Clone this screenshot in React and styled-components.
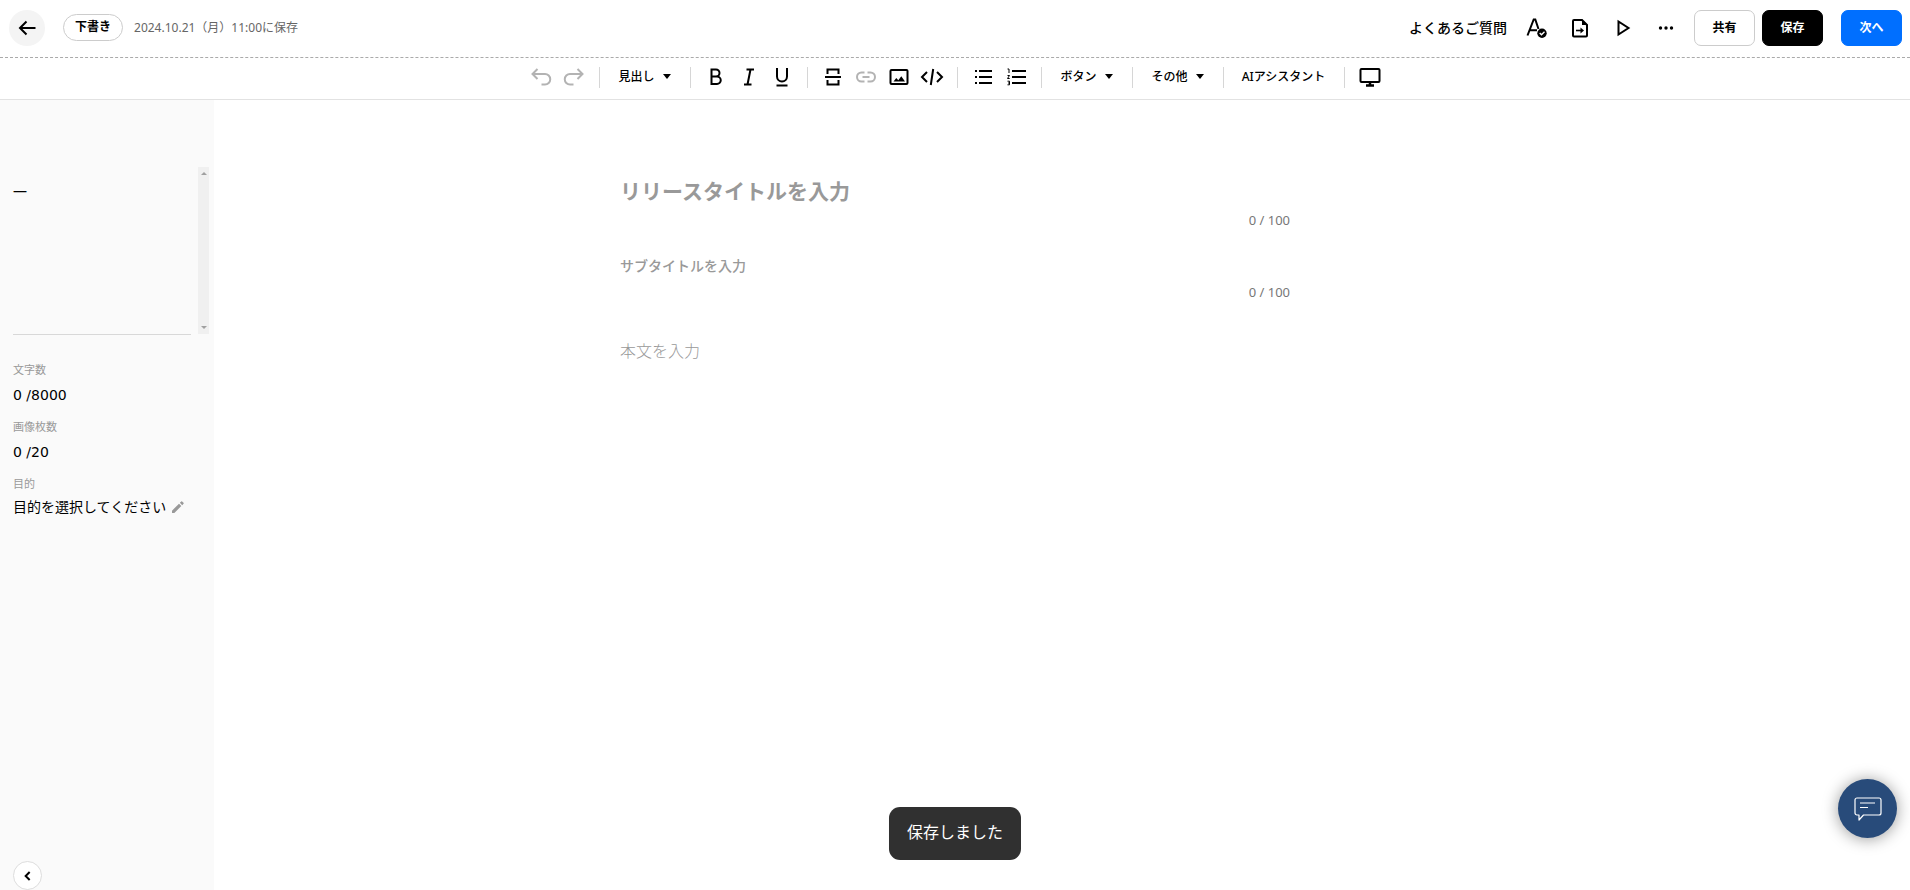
import { useState } from "react";
import styled, { createGlobalStyle } from "styled-components";

const BLUE = '#006fff'
const NAVY = '#284b7a'
const GRAY = '#999'
const FONT = '"Noto Sans", "Noto Sans CJK JP", sans-serif'
const NUMBER_FONT = '"DejaVu Sans", "Noto Sans CJK JP", sans-serif'

const GlobalStyle = createGlobalStyle`
  * {
    box-sizing: border-box;
  }
  body {
    margin: 0;
    font-family: ${FONT};
    color: #000;
    background: #fff;
  }
  button, input, textarea {
    font-family: inherit;
  }
`

const Page = styled.div`
  min-height: 100vh;
  display: flex;
  flex-direction: column;
`

const Header = styled.header`
  height: 58px;
  padding: 0 8px 2px 9px;
  display: flex;
  align-items: center;
  justify-content: space-between;
  border-bottom: 1px dashed #aaa;
`

const HeaderSide = styled.div`
  display: flex;
  align-items: center;
`

const BackButton = styled.button`
  width: 36px;
  height: 36px;
  padding: 0;
  border: none;
  border-radius: 50%;
  background: #f4f4f4;
  display: flex;
  align-items: center;
  justify-content: center;
  cursor: pointer;
`

const Status = styled.span`
  margin: 0 11px 0 18px;
  padding: 0 11px 2px;
  border: 1px solid #ccc;
  border-radius: 14px;
  font-size: 12px;
  line-height: 23px;
  font-weight: 700;
`

const SavedAt = styled.span`
  padding-bottom: 2px;
  font-size: 12px;
  color: #666;
`

const HelpLink = styled.a`
  margin-right: 8px;
  padding-bottom: 2px;
  font-size: 14px;
  font-weight: 500;
  color: #000;
  text-decoration: none;
`

const IconButton = styled.button`
  width: ${({ $width }) => $width || 32}px;
  height: 32px;
  padding: 0;
  border: none;
  background: none;
  color: ${({ disabled }) => (disabled ? '#b3b3b3' : '#000')};
  display: flex;
  align-items: center;
  justify-content: center;
  cursor: pointer;
`

const ActionButton = styled.button`
  width: 61px;
  height: 36px;
  padding: 0 0 2px;
  margin-left: ${({ $gap }) => $gap}px;
  border: 1px solid ${({ $border }) => $border};
  border-radius: 7px;
  background: ${({ $bg }) => $bg};
  color: ${({ $color }) => $color};
  font-size: 12px;
  font-weight: 700;
  cursor: pointer;
`

const Toolbar = styled.div`
  height: 42px;
  padding-bottom: 3px;
  display: flex;
  align-items: center;
  justify-content: center;
  border-bottom: 1px solid #e2e2e2;
`

const ToolGroup = styled.div`
  display: flex;
  gap: 1px;
`

const Separator = styled.span`
  width: 1px;
  height: 21px;
  margin: 0 9px;
  background: #d6d6d6;
`

const TextButton = styled.button`
  width: ${({ $width }) => $width}px;
  height: 32px;
  padding: 0 0 2px;
  border: none;
  background: none;
  color: #000;
  display: flex;
  align-items: center;
  justify-content: center;
  gap: 8px;
  font-size: 12px;
  font-weight: 500;
  white-space: nowrap;
  cursor: pointer;
`

const Caret = styled.span`
  border: 4px solid transparent;
  border-top: 5px solid #000;
  border-bottom: none;
`

const Body = styled.div`
  flex: 1;
  display: flex;
`

const Sidebar = styled.aside`
  width: 214px;
  padding: 67px 5px 0 13px;
  display: flex;
  flex-direction: column;
  align-items: flex-start;
  background: #fafafa;
`

const Outline = styled.div`
  width: 100%;
  height: 168px;
  display: flex;
  justify-content: space-between;
`

const OutlineText = styled.div`
  width: 178px;
  padding-top: 14px;
  border-bottom: 1px solid #d8d8d8;
  font-size: 14px;
  line-height: 20px;
`

const ScrollTrack = styled.div`
  width: 11px;
  height: 167px;
  padding: 5px 0;
  display: flex;
  flex-direction: column;
  align-items: center;
  justify-content: space-between;
  background: #f0f0f0;
`

const ScrollArrow = styled.span`
  border: 3px solid transparent;
  border-${({ $down }) => ($down ? 'top' : 'bottom')}-color: #a0a0a0;
  border-${({ $down }) => ($down ? 'bottom' : 'top')}: none;
`

const Stats = styled.dl`
  margin: 26px 0 0;
`

const StatLabel = styled.dt`
  font-size: 11px;
  line-height: 18px;
  color: ${GRAY};
`

const StatValue = styled.dd`
  margin: 0 0 10px;
  padding-top: 4px;
  font-family: ${NUMBER_FONT};
  font-size: 14px;
  line-height: 25px;
`

const Purpose = styled.dd`
  margin: 0;
  display: flex;
  align-items: center;
  gap: 4px;
  font-size: 14px;
  line-height: 28px;
`

const EditButton = styled.button`
  padding: 0;
  border: none;
  background: none;
  color: ${GRAY};
  display: flex;
  cursor: pointer;
`

const CollapseButton = styled.button`
  width: 29px;
  height: 29px;
  padding: 0;
  margin-top: auto;
  border: 1px solid #ddd;
  border-radius: 50%;
  background: #fff;
  display: flex;
  align-items: center;
  justify-content: center;
  cursor: pointer;
`

const Main = styled.main`
  flex: 1;
  padding: 73px 214px 0 0;
  display: flex;
  justify-content: center;
`

const Editor = styled.div`
  width: 670px;
  display: flex;
  flex-direction: column;
`

const Field = styled.input`
  width: 100%;
  height: ${({ $height }) => $height}px;
  padding: 0;
  border: none;
  outline: none;
  background: none;
  font-size: ${({ $size }) => $size}px;
  font-weight: ${({ $weight }) => $weight};
  &::placeholder {
    color: ${GRAY};
    opacity: 1;
  }
`

const Counter = styled.div`
  margin-bottom: ${({ $bottom }) => $bottom}px;
  padding-top: ${({ $top }) => $top}px;
  text-align: right;
  font-size: 13px;
  line-height: 20px;
  color: #777;
`

const BodyField = styled.textarea`
  width: 100%;
  height: 120px;
  padding: 0;
  border: none;
  outline: none;
  resize: none;
  background: none;
  font-size: 16px;
  line-height: 26px;
  font-weight: 300;
  &::placeholder {
    color: ${GRAY};
    opacity: 1;
  }
`

const Toast = styled.div`
  position: fixed;
  bottom: 30px;
  left: 50%;
  transform: translateX(-50%);
  padding: 0 18px 2px;
  border-radius: 11px;
  background: #303030;
  color: #fff;
  font-size: 16px;
  line-height: 51px;
  white-space: nowrap;
`

const ChatButton = styled.button`
  position: fixed;
  right: 13px;
  bottom: 52px;
  width: 59px;
  height: 59px;
  padding: 0;
  border: none;
  border-radius: 50%;
  background: ${NAVY};
  box-shadow: 0 1px 16px rgba(0, 0, 0, 0.4);
  display: flex;
  align-items: center;
  justify-content: center;
  cursor: pointer;
`

const Icon = ({ size = 24, stroke = 2, children }) => (
  <svg width={size} height={size} viewBox="0 0 24 24" fill="none" stroke="currentColor" strokeWidth={stroke} aria-hidden="true">
    {children}
  </svg>
)

const ICONS = {
  back: <path d="M20.500 12H5M11.500 5.500 5 12l6.500 6.500" />,
  proof: (
    <>
      <path d="M2.500 19.500 8.700 3.500h1.600L13.500 13M5 14.200h7" />
      <circle cx="17" cy="17.300" r="4.700" fill="currentColor" stroke="none" />
      <path d="m14.700 17 1.800 1.800 3-3" stroke="#fff" strokeWidth="1.400" />
    </>
  ),
  file: (
    <>
      <path d="M14 4H6a1 1 0 0 0-1 1v14.500a1 1 0 0 0 1 1h12a1 1 0 0 0 1-1V9z" />
      <path d="M14 3.500V9h5.500z" fill="currentColor" stroke="none" />
      <path d="M8 14.500h6" strokeWidth="1.600" />
      <path d="m12.500 11.500 3.500 3-3.500 3z" fill="currentColor" stroke="none" />
    </>
  ),
  play: <path d="M7.500 5.500v13L17.500 12z" />,
  more: (
    <g fill="currentColor" stroke="none">
      <circle cx="6.500" cy="12" r="1.700" />
      <circle cx="12" cy="12" r="1.700" />
      <circle cx="17.500" cy="12" r="1.700" />
    </g>
  ),
  undo: <path d="M8.500 4 3.500 9l5 5M4 9h12a5.200 5.200 0 0 1 0 10.500h-3.500" />,
  redo: <path d="m15.500 4 5 5-5 5M20 9H8A5.200 5.200 0 0 0 8 19.500h3.500" />,
  bold: <path d="M7.500 4.500h4.500a3.500 3.500 0 0 1 0 7H7.500zM7.500 11.500h5.500a3.700 3.700 0 0 1 0 7.500H7.500z" />,
  italic: <path d="M9.500 4.500h7.500M7 19.500h7.500M13.500 4.500l-3 15" />,
  underline: <path d="M7 3v8.500a5 5 0 0 0 10 0V3M6.500 20.500h11" />,
  rule: <path d="M4 12h16M6.500 9V4.500h11V9M6.500 15v4.500h11V15" />,
  link: <path d="M10.500 7.500H7.500a4.500 4.500 0 0 0 0 9h3M13.500 7.500h3a4.500 4.500 0 0 1 0 9h-3M8.500 12h7" />,
  image: (
    <>
      <rect x="3.500" y="5" width="17" height="14" rx="1" />
      <path d="M6.500 16.500 9.300 13l2 2.300 3-4 3.700 5.200z" fill="currentColor" stroke="none" />
    </>
  ),
  code: <path d="M7 7l-5 5 5 5M17 7l5 5-5 5M13.200 4l-2.400 16" />,
  bullets: (
    <>
      <path d="M8 6h13M8 12h13M8 18h13" />
      <path d="M4 6h2M4 12h2M4 18h2" />
    </>
  ),
  numbers: (
    <>
      <path d="M8 6h14M8 12h14M8 18h14" />
      <path d="M3.500 4H5v4M3.500 10.500h2l-2 3h2.200M3.500 16.200h2v3.600h-2M4 18h1.500" strokeWidth="1" />
    </>
  ),
  screen: (
    <>
      <rect x="2.500" y="4" width="19" height="13" rx="1" />
      <path d="M12 17v3M8 20.500h8" strokeWidth="2.500" />
    </>
  ),
  pencil: <path d="M3 17.500V21h3.500L17 10.500 13.500 7zM18.300 9.200l2-2a1 1 0 0 0 0-1.400l-2.100-2.100a1 1 0 0 0-1.400 0l-2 2z" fill="currentColor" stroke="none" />,
  left: <path d="m14.500 6-6 6 6 6" />,
}

const TOOLS = [
  [{ icon: 'undo', label: '元に戻す', disabled: true }, { icon: 'redo', label: 'やり直す', disabled: true }],
  [{ text: '見出し', width: 72, caret: true }],
  [{ icon: 'bold', label: '太字' }, { icon: 'italic', label: '斜体' }, { icon: 'underline', label: '下線' }],
  [
    { icon: 'rule', label: '区切り線' },
    { icon: 'link', label: 'リンク', disabled: true },
    { icon: 'image', label: '画像' },
    { icon: 'code', label: '埋め込み' },
  ],
  [{ icon: 'bullets', label: '箇条書き' }, { icon: 'numbers', label: '番号付きリスト' }],
  [{ text: 'ボタン', width: 72, caret: true }],
  [{ text: 'その他', width: 72, caret: true }],
  [{ text: 'AIアシスタント', width: 102 }],
  [{ icon: 'screen', label: 'プレビュー' }],
]

const Tool = ({ tool }) => {
  if (tool.text) {
    return (
      <TextButton type="button" $width={tool.width}>
        {tool.text}
        {tool.caret && <Caret />}
      </TextButton>
    )
  }
  return (
    <IconButton type="button" aria-label={tool.label} disabled={tool.disabled}>
      <Icon>{ICONS[tool.icon]}</Icon>
    </IconButton>
  )
}

export default function App() {
  const [title, setTitle] = useState('')
  const [subtitle, setSubtitle] = useState('')
  const [body, setBody] = useState('')

  return (
    <Page>
      <GlobalStyle />
      <Header>
        <HeaderSide>
          <BackButton type="button" aria-label="戻る"><Icon>{ICONS.back}</Icon></BackButton>
          <Status>下書き</Status>
          <SavedAt>2024.10.21（月）11:00に保存</SavedAt>
        </HeaderSide>
        <HeaderSide>
          <HelpLink href="#faq">よくあるご質問</HelpLink>
          <IconButton type="button" $width={43} aria-label="校正"><Icon>{ICONS.proof}</Icon></IconButton>
          <IconButton type="button" $width={43} aria-label="書き出し"><Icon>{ICONS.file}</Icon></IconButton>
          <IconButton type="button" $width={43} aria-label="再生"><Icon>{ICONS.play}</Icon></IconButton>
          <IconButton type="button" $width={43} aria-label="その他の操作"><Icon>{ICONS.more}</Icon></IconButton>
          <ActionButton type="button" $gap={7} $bg="#fff" $border="#ccc" $color="#000">共有</ActionButton>
          <ActionButton type="button" $gap={7} $bg="#000" $border="#000" $color="#fff">保存</ActionButton>
          <ActionButton type="button" $gap={18} $bg={BLUE} $border={BLUE} $color="#fff">次へ</ActionButton>
        </HeaderSide>
      </Header>
      <Toolbar role="toolbar">
        {TOOLS.map((group, i) => [
          i > 0 && <Separator key={`sep-${i}`} />,
          <ToolGroup key={`group-${i}`}>
            {group.map((tool) => <Tool key={tool.text || tool.icon} tool={tool} />)}
          </ToolGroup>,
        ])}
      </Toolbar>
      <Body>
        <Sidebar>
          <Outline>
            <OutlineText>{title || '―'}</OutlineText>
            <ScrollTrack aria-hidden="true">
              <ScrollArrow />
              <ScrollArrow $down />
            </ScrollTrack>
          </Outline>
          <Stats>
            <StatLabel>文字数</StatLabel>
            <StatValue>{body.length} /8000</StatValue>
            <StatLabel>画像枚数</StatLabel>
            <StatValue>0 /20</StatValue>
            <StatLabel>目的</StatLabel>
            <Purpose>
              目的を選択してください
              <EditButton type="button" aria-label="目的を編集"><Icon size={16}>{ICONS.pencil}</Icon></EditButton>
            </Purpose>
          </Stats>
          <CollapseButton type="button" aria-label="サイドバーを閉じる"><Icon size={16} stroke={3}>{ICONS.left}</Icon></CollapseButton>
        </Sidebar>
        <Main>
          <Editor>
            <Field aria-label="リリースタイトル" placeholder="リリースタイトルを入力" $height={36} $size={21} $weight={700} value={title} onChange={(e) => setTitle(e.target.value)} />
            <Counter $top={1} $bottom={22}>{title.length} / 100</Counter>
            <Field aria-label="サブタイトル" placeholder="サブタイトルを入力" $height={26} $size={14} $weight={500} value={subtitle} onChange={(e) => setSubtitle(e.target.value)} />
            <Counter $top={4} $bottom={36}>{subtitle.length} / 100</Counter>
            <BodyField aria-label="本文" placeholder="本文を入力" value={body} onChange={(e) => setBody(e.target.value)} />
          </Editor>
        </Main>
      </Body>
      <Toast role="status">保存しました</Toast>
      <ChatButton type="button" aria-label="チャット">
        <svg width="28" height="26" viewBox="0 0 28 26" fill="none" stroke="#fff" strokeWidth="1.2" strokeLinejoin="round" aria-hidden="true">
          <path d="M3 2h22a2 2 0 0 1 2 2v13a2 2 0 0 1-2 2H9.500L5 24v-5H3a2 2 0 0 1-2-2V4a2 2 0 0 1 2-2zM6 7h15M6 11.500h8" />
        </svg>
      </ChatButton>
    </Page>
  )
}
